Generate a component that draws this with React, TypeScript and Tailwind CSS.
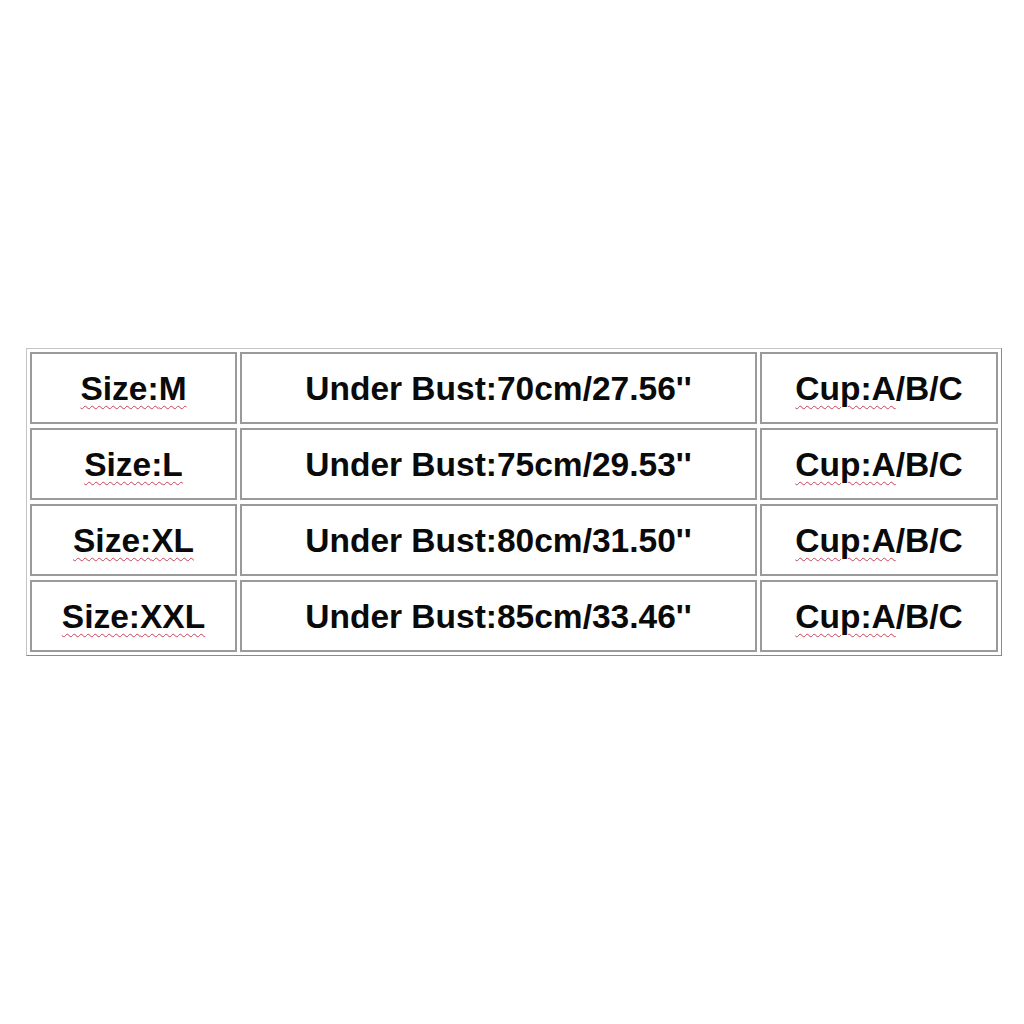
import React from 'react';

const rows = [
  { size: 'M', bust: '70cm/27.56' },
  { size: 'L', bust: '75cm/29.53' },
  { size: 'XL', bust: '80cm/31.50' },
  { size: 'XXL', bust: '85cm/33.46' },
];

const wavy = 'underline decoration-wavy decoration-[#c8405a] decoration-1 underline-offset-[5px]';

function Cell({ children }: { children: React.ReactNode }) {
  return (
    <div className="flex items-center justify-center pt-[2px] border-2 border-[#9a9a9a] bg-white">
      {children}
    </div>
  );
}

export default function App() {
  return (
    <div className="w-[1024px] h-[1024px] bg-white pt-[348px] pl-[26px]">
      <div
        className="w-[976px] h-[308px] border border-t-[#c4c4c4] border-l-[#c4c4c4] border-r-[#8a8a8a] border-b-[#8a8a8a] p-[3px] grid grid-cols-[207px_517px_238px] grid-rows-[repeat(4,72px)] gap-x-[3px] gap-y-[4px] text-[33.5px] font-bold text-[#0a0a0a]"
        style={{ fontFamily: '"Liberation Sans", Arial, sans-serif' }}
      >
        {rows.map((r) => (
          <React.Fragment key={r.size}>
            <Cell>
              <span className={wavy}>Size:{r.size}</span>
            </Cell>
            <Cell>
              <span>Under Bust:{r.bust}''</span>
            </Cell>
            <Cell>
              <span>
                <span className={wavy}>Cup:A</span>/B/C
              </span>
            </Cell>
          </React.Fragment>
        ))}
      </div>
    </div>
  );
}
